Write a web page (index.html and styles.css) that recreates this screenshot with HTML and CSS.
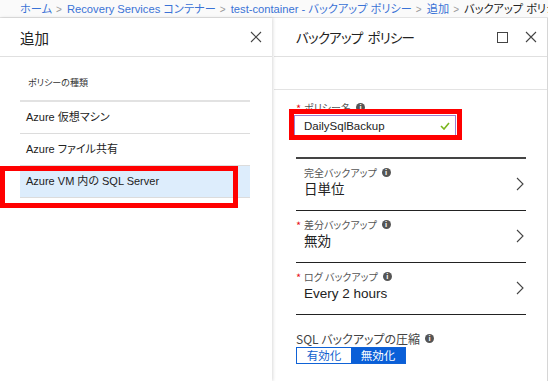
FILE: index.html
```html
<!DOCTYPE html>
<html lang="ja">
<head>
    <meta charset="UTF-8">
    <title>バックアップ ポリシー</title>
    <link rel="stylesheet" href="styles.css">
</head>
<body>
    <nav class="crumbs">
        <a>ホーム</a><span class="sep">&gt;</span>
        <a>Recovery Services コンテナー</a><span class="sep">&gt;</span>
        <a>test-container - バックアップ ポリシー</a><span class="sep">&gt;</span>
        <a>追加</a><span class="sep">&gt;</span>
        <span class="current">バックアップ ポリシー</span>
    </nav>

    <div class="panes">
        <section class="pane pane-add">
            <header class="pane-head">
                <h2>追加</h2>
                <span class="head-icons">
                    <svg width="12" height="12" viewBox="0 0 12 12"><path d="M1 1L11 11M11 1L1 11" stroke="#444" stroke-width="1.1" fill="none"/></svg>
                </span>
            </header>
            <div class="pane-body">
                <div class="kind-label">ポリシーの種類</div>
                <ul class="kind-list">
                    <li>Azure 仮想マシン</li>
                    <li>Azure ファイル共有</li>
                    <li class="selected">Azure VM 内の SQL Server<span class="mark mark-kind"></span></li>
                </ul>
            </div>
        </section>

        <section class="pane pane-policy">
            <header class="pane-head">
                <h2 class="title-narrow">バックアップ ポリシー</h2>
                <span class="head-icons">
                    <svg width="11" height="11" viewBox="0 0 11 11"><rect x="0.5" y="0.5" width="10" height="10" stroke="#444" fill="none"/></svg>
                    <svg width="12" height="12" viewBox="0 0 12 12"><path d="M1 1L11 11M11 1L1 11" stroke="#444" stroke-width="1.1" fill="none"/></svg>
                </span>
            </header>
            <div class="toolbar"></div>
            <div class="pane-body form">
                <div class="field name-field">
                    <div class="label"><span class="req">*</span>ポリシー名 <i class="info">i</i></div>
                    <div class="input">
                        <span>DailySqlBackup</span>
                        <svg width="10" height="8" viewBox="0 0 10 8"><path d="M1 4L4 7L9 1" stroke="#7ab51d" stroke-width="1.6" fill="none"/></svg>
                    </div>
                    <span class="mark mark-name"></span>
                </div>

                <div class="rows">
                    <div class="row">
                        <div>
                            <div class="label">完全バックアップ <i class="info">i</i></div>
                            <div class="value">日単位</div>
                        </div>
                        <svg class="chev" width="8" height="14" viewBox="0 0 8 14"><path d="M1 1L7 7L1 13" stroke="#444" stroke-width="1.1" fill="none"/></svg>
                    </div>
                    <div class="row">
                        <div>
                            <div class="label"><span class="req">*</span>差分バックアップ <i class="info">i</i></div>
                            <div class="value">無効</div>
                        </div>
                        <svg class="chev" width="8" height="14" viewBox="0 0 8 14"><path d="M1 1L7 7L1 13" stroke="#444" stroke-width="1.1" fill="none"/></svg>
                    </div>
                    <div class="row">
                        <div>
                            <div class="label"><span class="req">*</span>ログ バックアップ <i class="info">i</i></div>
                            <div class="value">Every 2 hours</div>
                        </div>
                        <svg class="chev" width="8" height="14" viewBox="0 0 8 14"><path d="M1 1L7 7L1 13" stroke="#444" stroke-width="1.1" fill="none"/></svg>
                    </div>
                </div>

                <div class="compress">
                    <div class="compress-label">SQL バックアップの圧縮 <i class="info">i</i></div>
                    <div class="toggle">
                        <span>有効化</span>
                        <span class="on">無効化</span>
                    </div>
                </div>
            </div>
        </section>
    </div>
</body>
</html>
```

FILE: styles.css
```css
body {
    margin: 0;
    width: 548px;
    height: 381px;
    overflow: hidden;
    background-color: #fff;
    color: #222;
    font-family: 'Liberation Sans', 'Noto Sans CJK JP', sans-serif;
    font-feature-settings: "palt";
}
.crumbs {
    height: 18px;
    box-sizing: border-box;
    padding: 2px 0 0 20px;
    font-size: 11.2px;
    line-height: 14px;
    white-space: nowrap;
    overflow: hidden;
    background-color: #fafafa;
    border-bottom: 1px solid #e3e3e3;
}
.crumbs a {
    color: #3b73d6;
}
.crumbs .sep {
    color: #999;
    margin: 0 2px 0 4px;
    font-size: 10px;
}
.crumbs .current {
    color: #222;
}
.panes {
    display: flex;
    height: 363px;
}
.pane {
    background-color: #fff;
    position: relative;
}
.pane-add {
    width: 272px;
    flex: none;
    box-shadow: 1px 0 3px rgba(0, 0, 0, 0.15);
    z-index: 1;
}
.pane-policy {
    flex: 1;
    margin-left: 2px;
    border-right: 1px solid #d6d6d6;
    overflow: hidden;
}
.pane-head {
    height: 39px;
    box-sizing: border-box;
    display: flex;
    align-items: center;
    justify-content: space-between;
    padding: 0 10px 0 20px;
    border-bottom: 1px solid #e0e0e0;
}
.pane-policy .pane-head {
    padding-left: 22px;
}
.pane-head h2 {
    margin: 0;
    font-size: 14.5px;
    font-weight: normal;
    color: #222;
    font-family: 'Noto Sans CJK JP', sans-serif;
}
.pane-head .title-narrow {
    font-size: 13.5px;
    letter-spacing: -0.8px;
    word-spacing: 3px;
}
.head-icons {
    display: flex;
    align-items: center;
    gap: 17px;
}
.pane-body {
    padding: 0 22px 0 20px;
}
.kind-label {
    font-size: 9px;
    color: #333;
    padding: 19px 0 0 8px;
    height: 24px;
    font-family: 'Noto Sans CJK JP', sans-serif;
}
.kind-list {
    list-style: none;
    margin: 0;
    padding: 0;
    width: 230px;
    border-top: 2px solid #e2e2e2;
}
.kind-list li {
    position: relative;
    height: 31px;
    line-height: 31px;
    padding-left: 6px;
    font-size: 11px;
    border-bottom: 1px solid #dcdcdc;
}
.kind-list li.selected {
    background-color: #ddedfc;
}
.mark {
    position: absolute;
    border: 5px solid #f00;
    box-sizing: border-box;
}
.mark-kind {
    left: -20px;
    top: 0;
    width: 238px;
    height: 42px;
}
.toolbar {
    height: 32px;
    border-bottom: 1px solid #e3e3e3;
}
.form {
    padding: 0 21px 0 22px;
}
.field {
    position: relative;
    padding-top: 11px;
}
.label {
    font-size: 10px;
    color: #555;
    height: 15px;
    padding-left: 8px;
    font-family: 'Noto Sans CJK JP', sans-serif;
    display: flex;
    align-items: center;
}
.name-field .label {
    height: 13px;
}
.req {
    color: #e81123;
    font-size: 11px;
    width: 8px;
    margin-left: -8px;
}
.info {
    display: inline-block;
    width: 9px;
    height: 9px;
    border-radius: 50%;
    background-color: #555;
    color: #fff;
    font-size: 7px;
    font-style: normal;
    font-weight: bold;
    line-height: 9px;
    text-align: center;
    margin-left: 5px;
}
.input {
    width: 162px;
    height: 21px;
    box-sizing: border-box;
    margin: 1px 0 0 -2px;
    border: 1px solid #9b7fd1;
    display: flex;
    align-items: center;
    justify-content: space-between;
    padding: 0 5px 0 9px;
    font-size: 11.5px;
    color: #222;
}
.mark-name {
    left: -7px;
    top: 19px;
    width: 173px;
    height: 31px;
}
.rows {
    margin-top: 21px;
    border-top: 2px solid #444;
}
.row {
    height: 52px;
    box-sizing: border-box;
    border-bottom: 1px solid #222;
    display: flex;
    align-items: flex-start;
    justify-content: space-between;
    padding: 6px 2px 0 0;
}
.row .chev {
    margin-top: 12px;
}
.row .value {
    font-size: 13.5px;
    line-height: 16px;
    padding-left: 8px;
    margin-top: 2px;
    color: #222;
}
.compress {
    padding-top: 15px;
}
.compress-label {
    font-size: 12px;
    color: #444;
    font-family: 'Noto Sans CJK JP', sans-serif;
    display: flex;
    align-items: center;
    height: 16px;
}
.toggle {
    display: flex;
    width: 110px;
    height: 17px;
    margin-top: 1px;
    border: 1px solid #0f62d6;
    box-sizing: border-box;
}
.toggle span {
    flex: 1;
    text-align: center;
    font-size: 11.5px;
    line-height: 15px;
    color: #0f5fce;
    font-family: 'Noto Sans CJK JP', sans-serif;
}
.toggle .on {
    background-color: #0a5fd8;
    color: #fff;
}
```
